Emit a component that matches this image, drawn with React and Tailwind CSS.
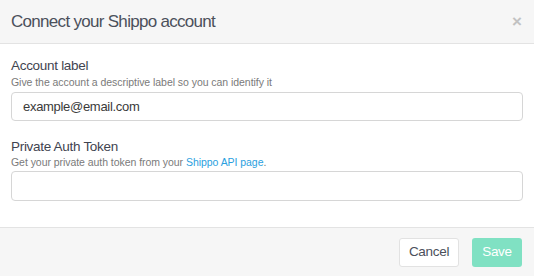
export default function App() {
  return (
    <div className="w-[534px] h-[276px] bg-white flex flex-col font-['Liberation_Sans',Arial,sans-serif] overflow-hidden">
      {/* Header */}
      <div className="h-[44px] bg-[#f6f6f6] border-b border-[#e3e3e3] flex items-center justify-between pl-[11px] pr-[12px] shrink-0">
        <h1 className="text-[17px] tracking-[-0.7px] text-[#4b505b] leading-none">Connect your Shippo account</h1>
        <button className="text-[#c2c2c2] text-[17px] font-bold leading-none">×</button>
      </div>

      {/* Body */}
      <div className="flex-1 px-[11px] pt-[14px]">
        <div className="flex flex-col">
          <label className="text-[13.5px] tracking-[-0.3px] text-[#3f4450] leading-[16px]">Account label</label>
          <p className="text-[10.5px] tracking-[-0.05px] text-[#7a7a7a] leading-[13px] mt-[2px]">
            Give the account a descriptive label so you can identify it
          </p>
          <input
            className="mt-[3px] h-[29px] w-full border border-[#d6d6d6] rounded-[4px] px-[11px] text-[13px] tracking-[-0.3px] text-[#3a3a3a] outline-none"
            defaultValue="example@email.com"
          />
        </div>
        <div className="flex flex-col mt-[18px]">
          <label className="text-[13.5px] tracking-[-0.3px] text-[#3f4450] leading-[16px]">Private Auth Token</label>
          <p className="text-[10.5px] tracking-[-0.05px] text-[#7a7a7a] leading-[13px] mt-[1px]">
            Get your private auth token from your{' '}
            <a className="text-[#2b9fe0]">Shippo API page</a>.
          </p>
          <input className="mt-[2px] h-[30px] w-full border border-[#d6d6d6] rounded-[4px] px-[11px] text-[13px] outline-none" />
        </div>
      </div>

      {/* Footer */}
      <div className="h-[49px] bg-[#f6f6f6] border-t border-[#e3e3e3] flex items-start justify-end gap-[13px] pt-[10px] pr-[12px] shrink-0">
        <button className="h-[29px] w-[60px] bg-white border border-[#e2e2e2] rounded-[3px] text-[13.5px] tracking-[-0.3px] text-[#4b505b]">
          Cancel
        </button>
        <button className="h-[29px] w-[50px] bg-[#80e1c3] rounded-[3px] text-[13.5px] tracking-[-0.3px] text-white">
          Save
        </button>
      </div>
    </div>
  );
}
